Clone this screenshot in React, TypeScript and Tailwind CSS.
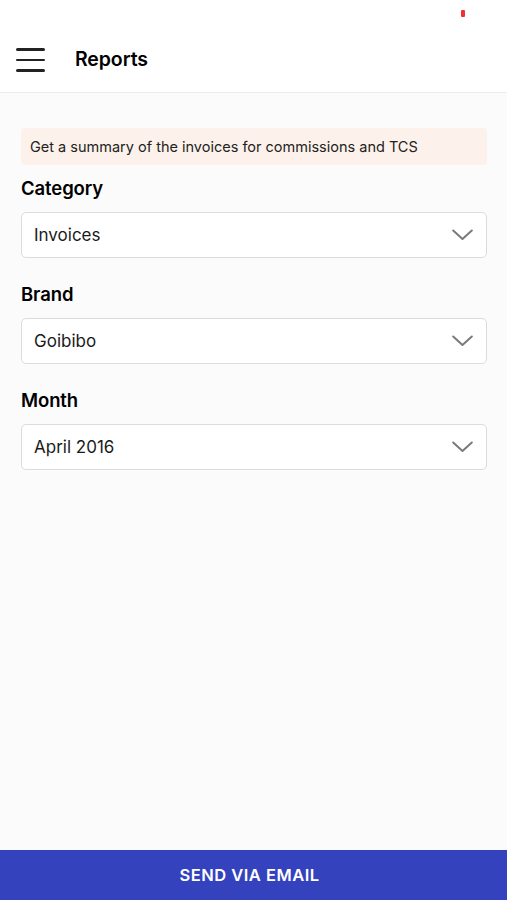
import React from "react";

const fields = [
  { label: "Category", value: "Invoices" },
  { label: "Brand", value: "Goibibo" },
  { label: "Month", value: "April 2016" },
];

const Chevron = () => (
  <svg width="21" height="12" viewBox="0 0 21 12" fill="none">
    <path d="M1.2 1.5 L10.5 10 L19.8 1.5" stroke="#7a7a7a" strokeWidth="2" strokeLinecap="round" strokeLinejoin="round" />
  </svg>
);

export default function App() {
  return (
    <div className="h-[900px] w-full flex flex-col bg-[#fbfbfb] text-black" style={{ fontFamily: "Inter, 'Noto Sans', sans-serif" }}>
      {/* status bar */}
      <div className="h-[28px] bg-white flex justify-end pr-[42px] pt-[10px]">
        <div className="w-[4px] h-[7px] rounded-[1px] bg-[#f03030]" />
      </div>

      {/* header */}
      <div className="h-[65px] bg-white border-b border-[#ececec] flex items-center">
        <div className="ml-[16px] w-[29px] flex flex-col gap-[8px]">
          <div className="h-[2.5px] bg-[#222] rounded-full" />
          <div className="h-[2.5px] bg-[#222] rounded-full" />
          <div className="h-[2.5px] bg-[#222] rounded-full" />
        </div>
        <h1 className="ml-[30px] text-[19.5px] font-semibold tracking-[-0.1px]">Reports</h1>
      </div>

      {/* content */}
      <div className="flex-1 pl-[21px] pr-[20px] pt-[35px]">
        <div className="h-[37px] bg-[#fdf2eb] rounded-[3px] flex items-center px-[9px] text-[14.5px] text-[#222]">
          Get a summary of the invoices for commissions and TCS
        </div>

        {fields.map((f, i) => (
          <div key={f.label} className={i === 0 ? "mt-[11px]" : "mt-[24px]"}>
            <div className="h-[24px] leading-[24px] text-[18.5px] font-semibold tracking-[-0.1px]">{f.label}</div>
            <div className="mt-[12px] h-[46px] bg-white border border-[#dcdcdc] rounded-[5px] flex items-center justify-between pl-[12px] pr-[13px]">
              <span className="text-[17px] text-[#1a1a1a] pt-[2px]">{f.value}</span>
              <Chevron />
            </div>
          </div>
        ))}
      </div>

      {/* bottom button */}
      <button className="h-[50px] w-full bg-[#3442be] text-white text-[16.5px] font-semibold tracking-[0.5px] flex items-center justify-center pr-[8px]">
        SEND VIA EMAIL
      </button>
    </div>
  );
}
